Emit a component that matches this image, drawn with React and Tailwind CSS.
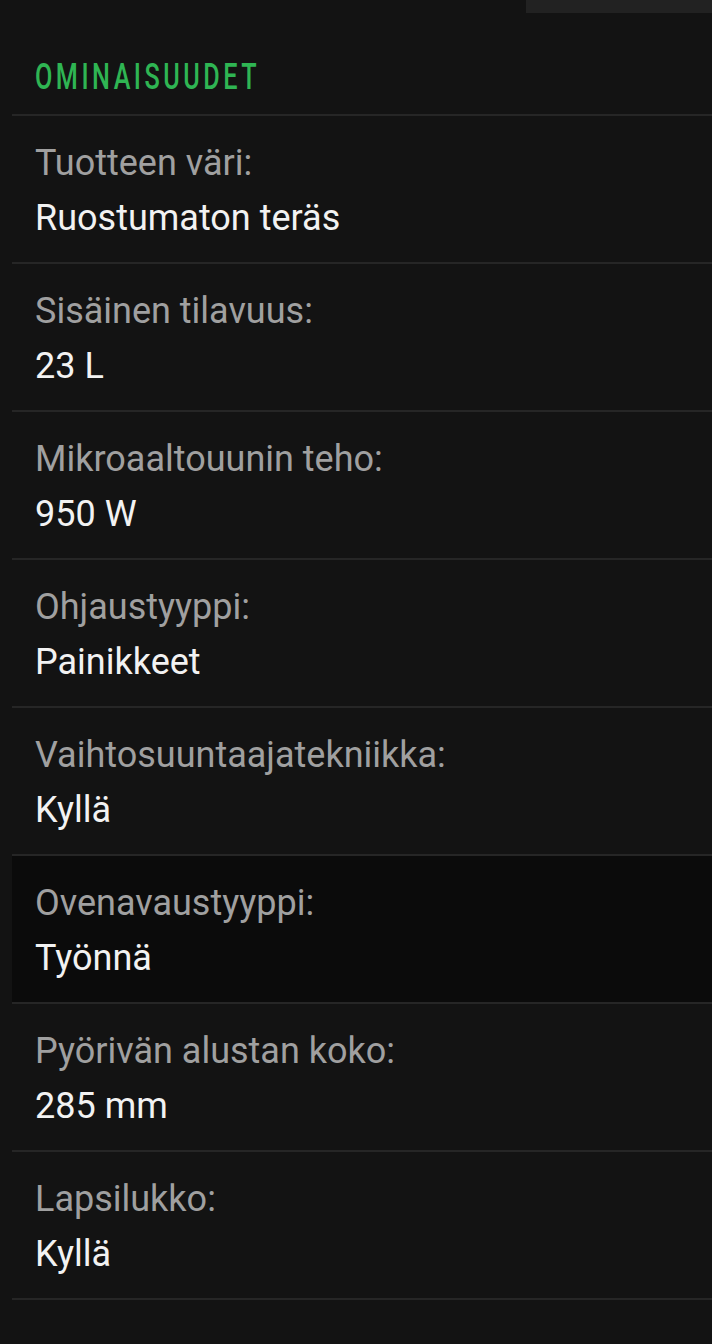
import React from "react";

const rows = [
  ["Tuotteen väri:", "Ruostumaton teräs"],
  ["Sisäinen tilavuus:", "23 L"],
  ["Mikroaaltouunin teho:", "950 W"],
  ["Ohjaustyyppi:", "Painikkeet"],
  ["Vaihtosuuntaajatekniikka:", "Kyllä"],
  ["Ovenavaustyyppi:", "Työnnä", true],
  ["Pyörivän alustan koko:", "285 mm"],
  ["Lapsilukko:", "Kyllä"],
];

export default function App() {
  return (
    <div
      className="min-h-screen w-[712px] bg-[#131313] overflow-hidden"
      style={{ fontFamily: "Roboto, 'Noto Sans', sans-serif" }}
    >
      <div className="flex justify-end">
        <div className="h-[13px] w-[186px] bg-[#222222]" />
      </div>
      <div className="mt-[47px] mb-[19px] pl-[35px] h-[35px] leading-[35px]">
        <span className="inline-block origin-left scale-x-[0.7] text-[36px] font-medium leading-[35px] tracking-[5px] text-[#2fb553] whitespace-nowrap">
          OMINAISUUDET
        </span>
      </div>
      <div className="ml-[12px] border-b-2 border-[#262626]">
        {rows.map(([label, value, hl]) => (
          <div
            key={label}
            className={
              "border-t-2 border-[#262626] pl-[23px] pt-[20px] pb-[16px] " +
              (hl ? "bg-[#0b0b0b]" : "")
            }
          >
            <div className="text-[36px] leading-[55px] text-[#a0a0a0] whitespace-nowrap">
              {label}
            </div>
            <div className="text-[36px] leading-[55px] text-[#f2f2f2] whitespace-nowrap">
              {value}
            </div>
          </div>
        ))}
      </div>
    </div>
  );
}
